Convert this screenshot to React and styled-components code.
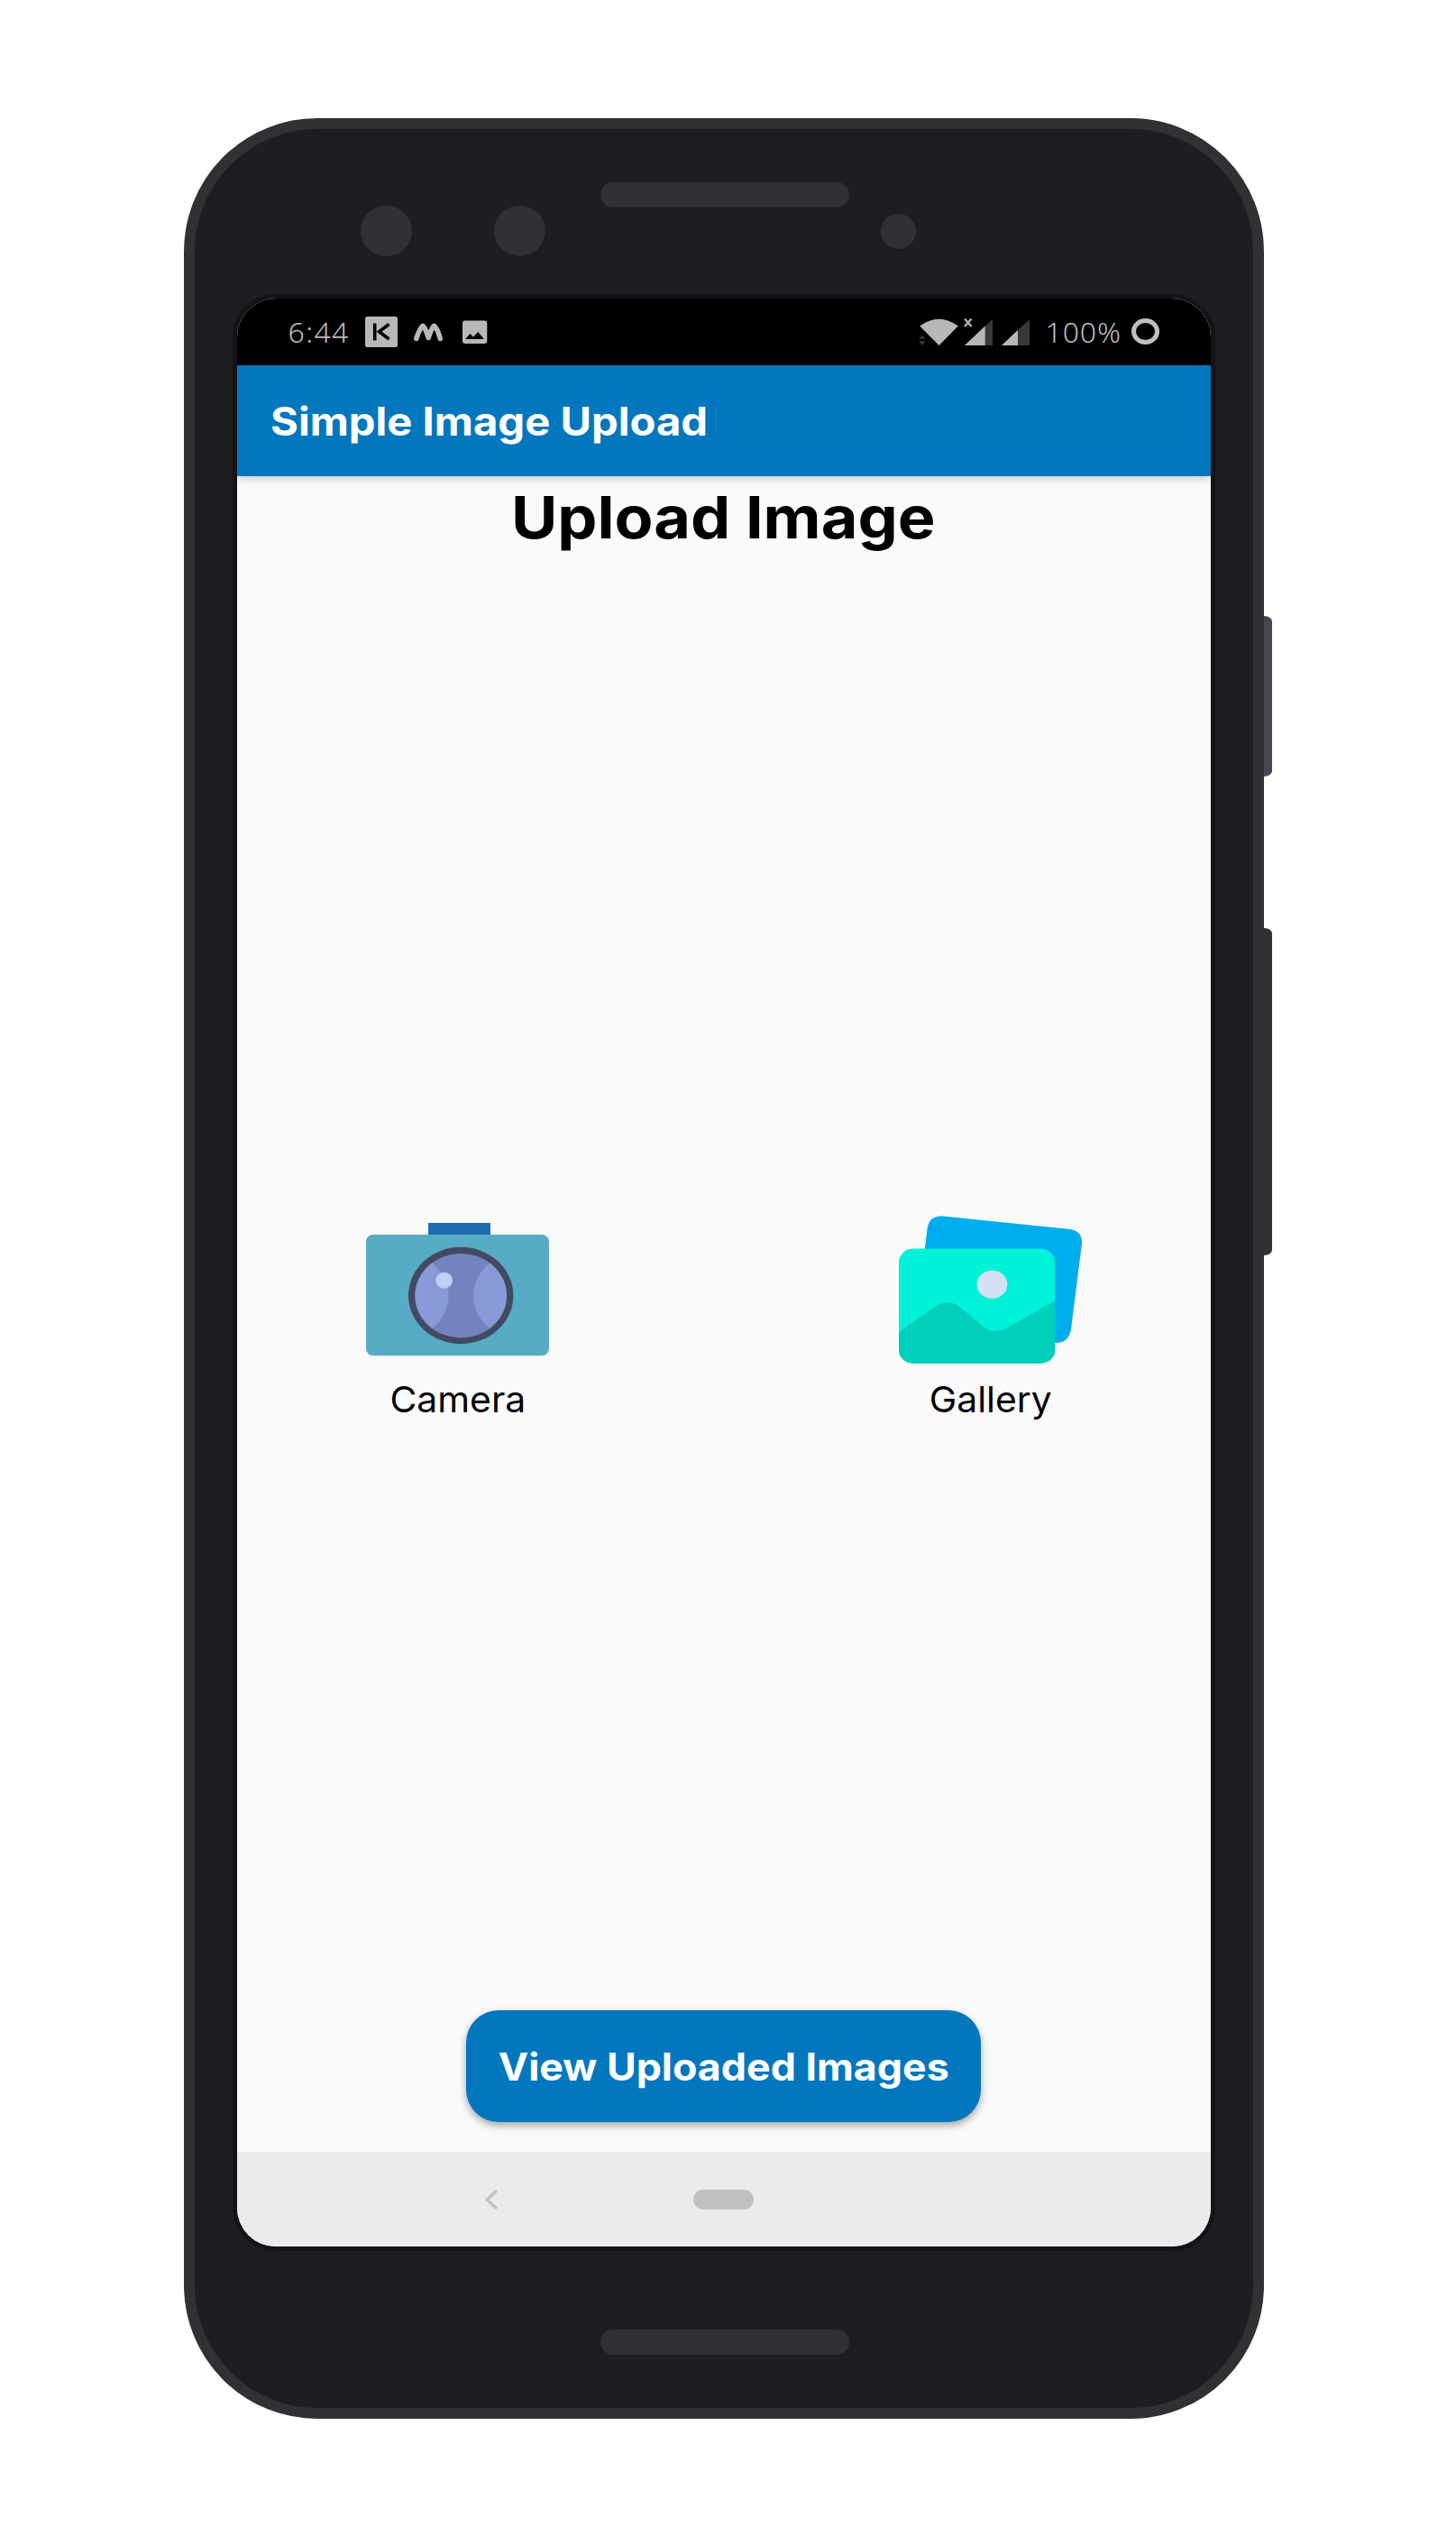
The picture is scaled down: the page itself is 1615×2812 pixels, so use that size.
import React from "react";
import styled, { createGlobalStyle } from "styled-components";

const GlobalStyle = createGlobalStyle`
  body {
    margin: 0;
    background: #ffffff;
    font-family: Inter, "Noto Sans", sans-serif;
  }
  svg { display: block; }
`;

const Page = styled.main`
  box-sizing: border-box;
  width: 1615px;
  height: 2812px;
  padding: 131px 0 0 204px;
  display: flex;
  align-items: flex-start;
`;

const Phone = styled.div`
  box-sizing: border-box;
  width: 1197.5px;
  height: 2550.5px;
  border: 12px solid #313134;
  border-radius: 148px;
  background: #1e1d21;
  display: flex;
  flex-direction: column;
  align-items: flex-start;
`;

const SideButtons = styled.div`
  display: flex;
  flex-direction: column;
  gap: 168px;
  padding-top: 551.5px;
`;

const SideButton = styled.div`
  width: 9.5px;
  height: ${(p) => p.$height}px;
  border-radius: 0 9px 9px 0 / 0 6px 6px 0;
  background: ${(p) => p.$color};
`;

const TopBezel = styled.div`
  box-sizing: border-box;
  flex: none;
  height: 188px;
  padding: 59px 0 0 184px;
  display: flex;
  align-items: flex-start;
`;

const Lens = styled.div`
  flex: none;
  width: ${(p) => p.$size}px;
  height: ${(p) => p.$size}px;
  border-radius: 50%;
  background: #2f3134;
  margin: ${(p) => p.$margin};
`;

const Speaker = styled.div`
  flex: none;
  width: 276px;
  height: 28px;
  border-radius: 14px;
  background: #2f3134;
`;

const BottomBezel = styled.div`
  padding: 92px 0 0 450px;
`;

const ScreenRim = styled.div`
  flex: none;
  margin-left: 46.5px;
  border-radius: 43px;
  box-shadow: 0 0 0 5px #141417;
`;

const Screen = styled.div`
  width: 1080px;
  height: 2160px;
  border-radius: 43px;
  overflow: hidden;
  background: #fafafa;
  display: flex;
  flex-direction: column;
`;

const StatusBar = styled.div`
  box-sizing: border-box;
  flex: none;
  height: 74px;
  padding: 0 57px 0 57px;
  background: #000000;
  color: #bcbcbc;
  display: flex;
  align-items: center;
  justify-content: space-between;
`;

const StatusGroup = styled.div`
  display: flex;
  align-items: center;
`;

const StatusText = styled.span`
  display: block;
  width: ${(p) => p.$width}px;
  margin-right: ${(p) => p.$gap}px;
  font-family: "Noto Sans", sans-serif;
  font-weight: 350;
  font-size: 32px;
  line-height: 36px;
  letter-spacing: ${(p) => p.$spacing}px;
  white-space: nowrap;
`;

const StatusIcon = styled.svg`
  flex: none;
  height: 36px;
  width: ${(p) => p.$width}px;
  margin-right: ${(p) => p.$gap || 0}px;
`;

const AppBar = styled.header`
  flex: none;
  height: 123px;
  padding-left: 37.5px;
  background: #0277bd;
  box-shadow: 0 2px 10px rgba(0, 0, 0, 0.22);
  display: flex;
  align-items: center;
`;

const AppTitle = styled.h1`
  margin: 0;
  color: #ffffff;
  font-size: 43.5px;
  font-weight: 700;
  line-height: 60px;
  white-space: nowrap;
  transform: scaleX(1.085);
  transform-origin: left center;
`;

const Content = styled.section`
  flex: 1;
  min-height: 0;
  display: flex;
  flex-direction: column;
  align-items: center;
`;

const Heading = styled.h2`
  margin: 6px 0 0;
  height: 80px;
  color: #000000;
  font-size: 64.5px;
  font-weight: 700;
  line-height: 80px;
  white-space: nowrap;
  transform: scaleX(1.088);
`;

const Sources = styled.div`
  margin-top: 731px;
  padding-left: 1px;
  display: flex;
  gap: 387px;
`;

const Source = styled.button`
  width: 204px;
  padding: 0;
  border: 0;
  background: none;
  font-family: inherit;
  display: flex;
  flex-direction: column;
  align-items: center;
`;

const SourceLabel = styled.span`
  margin-top: 11px;
  color: #000000;
  font-size: 39.5px;
  font-weight: 400;
  line-height: 52px;
  white-space: nowrap;
  transform: scaleX(1.035);
`;

const ViewButton = styled.button`
  margin: auto 0 33px;
  width: 571px;
  height: 124px;
  padding: 0;
  border: 0;
  border-radius: 36px;
  background: #0277bd;
  box-shadow: 0 4px 8px rgba(0, 0, 0, 0.34);
  color: #ffffff;
  font-family: inherit;
  font-size: 42px;
  font-weight: 700;
  white-space: nowrap;
`;

const ViewLabel = styled.span`
  display: inline-block;
  transform: scaleX(1.065);
`;

const NavBar = styled.nav`
  box-sizing: border-box;
  flex: none;
  height: 105px;
  padding-left: 274.5px;
  background: #ebebeb;
  display: flex;
  align-items: center;
`;

const HomePill = styled.div`
  width: 67px;
  height: 22px;
  margin-left: 216px;
  border-radius: 11px;
  background: #c1c1c1;
`;

const CameraIcon = () => (
  <svg width="204" height="170" viewBox="406 1345 204 170">
    <rect x="475" y="1356" width="69" height="14" fill="#1c6cb0" />
    <rect x="406" y="1369" width="203" height="134.3" rx="8" fill="#58abc4" />
    <ellipse cx="511.2" cy="1436.5" rx="58.2" ry="53.7" fill="#434a63" />
    <clipPath id="lens">
      <ellipse cx="511.2" cy="1436.7" rx="50.8" ry="46.7" />
    </clipPath>
    <g clipPath="url(#lens)">
      <rect x="455" y="1385" width="112" height="104" fill="#7483bf" />
      <ellipse cx="446.5" cy="1436.7" rx="51" ry="47" fill="#889bd8" />
      <ellipse cx="576" cy="1436.7" rx="51" ry="47" fill="#889bd8" />
    </g>
    <ellipse cx="492.7" cy="1419.7" rx="9.4" ry="9" fill="#bfd0f8" />
  </svg>
);

const GalleryIcon = () => (
  <svg width="204" height="170" viewBox="997 1345 204 170">
    <path
      d="M1028.5 1362.5Q1030.5 1347.5 1045.5 1348.5L1187 1363Q1201 1365.5 1200 1379L1188 1474Q1185.5 1488.5 1172 1489L1160 1488L1024 1400Z"
      fill="#00adec"
    />
    <clipPath id="photo">
      <rect x="997" y="1384.5" width="173.2" height="127.2" rx="16" ry="15" />
    </clipPath>
    <g clipPath="url(#photo)">
      <rect x="997" y="1384" width="174" height="129" fill="#00f2d8" />
      <path
        d="M997 1477L1035 1450.5Q1050.5 1439 1064.5 1449L1089 1469.5Q1101.5 1480.5 1116 1473L1171 1442V1513H997Z"
        fill="#00cfb9"
      />
    </g>
    <ellipse cx="1100.5" cy="1424.3" rx="16.8" ry="15.6" fill="#d5e1f3" />
  </svg>
);

export default function App() {
  return (
    <>
      <GlobalStyle />
      <Page>
        <Phone>
          <TopBezel>
            <Lens $size={56.5} $margin="25.5px 91.5px 0 0" />
            <Lens $size={56.5} $margin="25.5px 61.5px 0 0" />
            <Speaker />
            <Lens $size={38.5} $margin="35px 0 0 35px" />
          </TopBezel>
          <ScreenRim>
            <Screen>
              <StatusBar>
                <StatusGroup>
                  <StatusText $width={68} $gap={17} $spacing={1.4}>6:44</StatusText>
                  <StatusIcon $width={36} $gap={18} viewBox="405 350 36 36">
                    <rect x="405" y="351" width="36" height="34" rx="2.5" fill="#b8b8b8" />
                    <path d="M415.7 358.5V377.5M431.5 359.5L420.5 367.7L431.5 376" fill="none" stroke="#000" strokeWidth="3.6" />
                  </StatusIcon>
                  <StatusIcon $width={32} $gap={22} viewBox="459 350 32 36">
                    <path d="M461.7 375.5C464 369 466 363.5 469 361.3C472 363.5 473.5 370 475.2 374.5C477 370 478.5 363.5 481.5 361.3C484.5 363.5 486.5 369 488.3 375.5" fill="none" stroke="#b8b8b8" strokeWidth="5.5" strokeLinecap="round" strokeLinejoin="round" />
                  </StatusIcon>
                  <StatusIcon $width={28} viewBox="513.5 350 28 36">
                    <rect x="513.5" y="355.5" width="27.3" height="25.5" rx="3" fill="#b8b8b8" />
                    <path d="M516.5 376L522 370L525.5 373.8L530.7 368L537.5 376Z" fill="#000" />
                  </StatusIcon>
                </StatusGroup>
                <StatusGroup>
                  <StatusIcon $width={45} $gap={5} viewBox="1019 350 45 36">
                    <path d="M1020.2 361.5Q1041.5 346 1062.8 361.5L1041.5 383Z" fill="#b8b8b8" />
                    <path d="M1019.3 375.7L1023 371.8L1026.7 375.7ZM1019.3 378.3L1023 383L1026.7 378.3Z" fill="#383838" />
                  </StatusIcon>
                  <StatusIcon $width={33} $gap={9} viewBox="1069 350 33 36">
                    <path d="M1101 354V383H1070Z" fill="#383838" />
                    <path d="M1092.7 361.5V383H1070Z" fill="#b8b8b8" />
                    <path d="M1070 353.5L1077.5 362M1077.5 353.5L1070 362" stroke="#b8b8b8" strokeWidth="2.2" />
                  </StatusIcon>
                  <StatusIcon $width={31} $gap={18} viewBox="1111 350 31 36">
                    <path d="M1142 354V383H1111Z" fill="#383838" />
                    <path d="M1129 366V383H1111Z" fill="#b8b8b8" />
                  </StatusIcon>
                  <StatusText $width={85} $gap={10} $spacing={0.9}>100%</StatusText>
                  <StatusIcon $width={31} viewBox="1255 350 31 36">
                    <ellipse cx="1270.5" cy="367.5" rx="13" ry="12" fill="none" stroke="#c0c0c0" strokeWidth="5" />
                  </StatusIcon>
                </StatusGroup>
              </StatusBar>
              <AppBar>
                <AppTitle>Simple Image Upload</AppTitle>
              </AppBar>
              <Content>
                <Heading>Upload Image</Heading>
                <Sources>
                  <Source>
                    <CameraIcon />
                    <SourceLabel>Camera</SourceLabel>
                  </Source>
                  <Source>
                    <GalleryIcon />
                    <SourceLabel>Gallery</SourceLabel>
                  </Source>
                </Sources>
                <ViewButton>
                  <ViewLabel>View Uploaded Images</ViewLabel>
                </ViewButton>
              </Content>
              <NavBar>
                <svg width="16" height="24" viewBox="0 0 16 24">
                  <path d="M14 2L3 12L14 22" fill="none" stroke="#c1c1c1" strokeWidth="3.2" />
                </svg>
                <HomePill />
              </NavBar>
            </Screen>
          </ScreenRim>
          <BottomBezel>
            <Speaker />
          </BottomBezel>
        </Phone>
        <SideButtons>
          <SideButton $height={178.5} $color="#47484d" />
          <SideButton $height={363} $color="#2f3134" />
        </SideButtons>
      </Page>
    </>
  );
}
